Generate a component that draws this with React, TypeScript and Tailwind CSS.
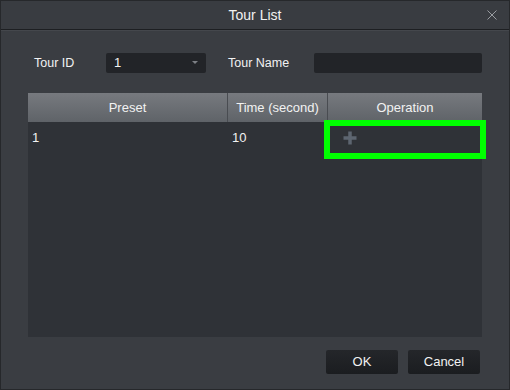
const App = () => (
  <div className="relative w-[510px] h-[390px] bg-[#3a3d42] border border-[#26282b] flex flex-col text-[#f2f2f2] font-['Liberation_Sans',Arial,sans-serif] overflow-hidden">
    {/* Title bar */}
    <div className="h-[29px] shrink-0 flex items-center justify-center relative bg-[#393c41] border-b border-[#1d1f22]">
      <span className="text-[14px]">Tour List</span>
      <svg className="absolute right-[12px] top-[9px]" width="10" height="10" viewBox="0 0 10 10">
        <path d="M0.5 0.5 L9.5 9.5 M9.5 0.5 L0.5 9.5" stroke="#9a9da2" strokeWidth="1" />
      </svg>
    </div>
    <div className="h-px bg-[#44474c] shrink-0" />

    <div className="flex-1 flex flex-col pl-[27px] pr-[27px]">
      {/* Form row */}
      <div className="mt-[22px] flex items-center h-[20px] text-[12.5px]">
        <span className="ml-[6px] w-[72px]">Tour ID</span>
        <div className="w-[100px] h-[20px] bg-[#222428] rounded-[2px] flex items-center justify-between pl-[8px] pr-[8px]">
          <span className="text-[13px]">1</span>
          <svg width="6" height="4" viewBox="0 0 6 4">
            <path d="M0 0 L6 0 L3 3 Z" fill="#7d8085" />
          </svg>
        </div>
        <span className="ml-[22px] w-[86px]">Tour Name</span>
        <div className="flex-1 h-[20px] bg-[#222428] rounded-[2px]" />
      </div>

      {/* Table */}
      <div className="mt-[20px] h-[244px] bg-[#2f3237] flex flex-col text-[13px]">
        <div className="h-[29px] flex bg-gradient-to-b from-[#777a7f] to-[#5f6368]">
          <div className="w-[200px] flex items-center justify-center border-r border-[#494c51]">Preset</div>
          <div className="w-[100px] flex items-center justify-center border-r border-[#494c51]">Time (second)</div>
          <div className="flex-1 flex items-center justify-center">Operation</div>
        </div>
        <div className="h-[32px] flex items-center">
          <div className="w-[200px] pl-[4px]">1</div>
          <div className="w-[100px] pl-[4px]">10</div>
          <div className="flex-1 pl-[14px] flex items-center">
            <svg width="16" height="16" viewBox="0 0 16 16">
              <path d="M8 1.5 V14.5 M1.5 8 H14.5" stroke="#5d6570" strokeWidth="3.5" />
            </svg>
          </div>
        </div>
      </div>

      {/* Buttons */}
      <div className="mt-[13px] flex justify-end gap-[10px] pr-[2px] text-[13px]">
        <button className="w-[72px] h-[24px] rounded-[2px] bg-gradient-to-b from-[#24262a] to-[#1b1d20] text-[#f2f2f2]">OK</button>
        <button className="w-[72px] h-[24px] rounded-[2px] bg-gradient-to-b from-[#24262a] to-[#1b1d20] text-[#f2f2f2]">Cancel</button>
      </div>
    </div>

    {/* Highlight overlay */}
    <div className="absolute left-[323px] top-[119px] w-[162px] h-[39px] border-[6px] border-[#00ff00]" />
  </div>
);

export default App;
